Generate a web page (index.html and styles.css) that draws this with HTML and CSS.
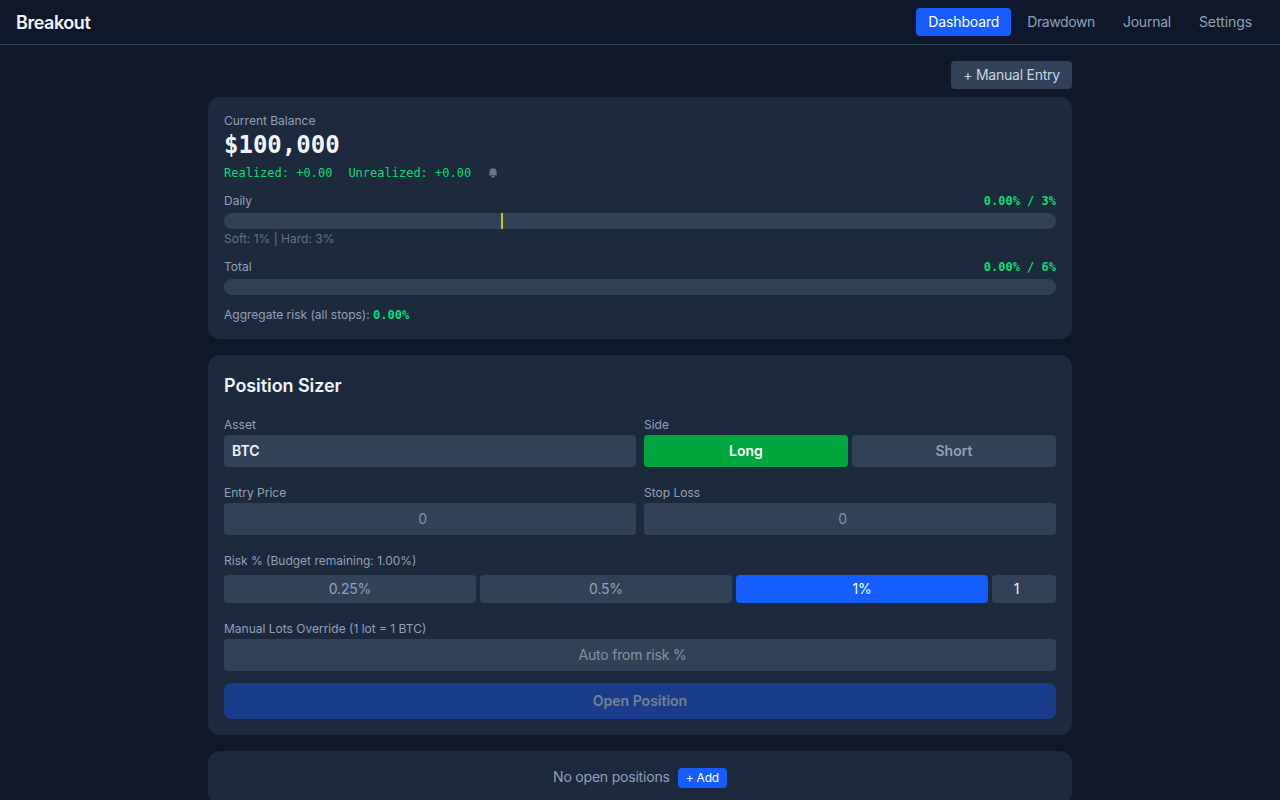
FILE: index.html
```html
<!DOCTYPE html>
<html lang="en">
<head>
<meta charset="utf-8">
<title>Breakout</title>
<link rel="stylesheet" href="styles.css">
</head>
<body>
<header class="topbar">
  <h1 class="brand">Breakout</h1>
  <nav class="nav">
    <a class="nav-link active">Dashboard</a>
    <a class="nav-link drawdown">Drawdown</a>
    <a class="nav-link journal">Journal</a>
    <a class="nav-link">Settings</a>
  </nav>
</header>
<main class="main">
  <div class="toolbar"><button class="manual">+ Manual Entry</button></div>
  <section class="card balance">
    <div class="label">Current Balance</div>
    <div class="amount">$100,000</div>
    <div class="pnl">
      <span>Realized: +0.00</span>
      <span>Unrealized: +0.00</span>
      <svg class="bell" viewBox="0 0 20 20" fill="currentColor"><path d="M10 2a6 6 0 00-6 6v3.586l-.707.707A1 1 0 004 14h12a1 1 0 00.707-1.707L16 11.586V8a6 6 0 00-6-6zM10 18a3 3 0 01-3-3h6a3 3 0 01-3 3z"/></svg>
    </div>
    <div class="meter daily">
      <div class="meter-head"><span>Daily</span><span class="value">0.00% / 3%</span></div>
      <div class="track"><div class="soft-mark"></div></div>
      <div class="hint">Soft: 1% | Hard: 3%</div>
    </div>
    <div class="meter">
      <div class="meter-head"><span>Total</span><span class="value">0.00% / 6%</span></div>
      <div class="track"></div>
    </div>
    <div class="label aggregate">Aggregate risk (all stops): <span class="value">0.00%</span></div>
  </section>
  <section class="card sizer">
    <h2 class="title">Position Sizer</h2>
    <div class="columns">
      <div>
        <div class="label">Asset</div>
        <div class="field asset">BTC</div>
      </div>
      <div>
        <div class="label">Side</div>
        <div class="sides">
          <button class="side long">Long</button>
          <button class="side">Short</button>
        </div>
      </div>
      <div>
        <div class="label">Entry Price</div>
        <div class="field number">0</div>
      </div>
      <div>
        <div class="label">Stop Loss</div>
        <div class="field number">0</div>
      </div>
    </div>
    <div>
      <div class="label">Risk % (Budget remaining: 1.00%)</div>
      <div class="risks">
        <button class="risk">0.25%</button>
        <button class="risk">0.5%</button>
        <button class="risk selected">1%</button>
        <div class="risk custom">1</div>
      </div>
    </div>
    <div>
      <div class="label">Manual Lots Override (1 lot = 1 BTC)</div>
      <div class="field number">Auto from risk %</div>
    </div>
    <button class="open">Open Position</button>
  </section>
  <section class="card positions">
    <span class="empty">No open positions</span><button class="add">+ Add</button>
  </section>
</main>
</body>
</html>
```
FILE: styles.css
```css
* { box-sizing: border-box; margin: 0; }
html { height: 100%; overflow: hidden; }
body {
  height: 100%;
  overflow: hidden;
  background: #0f172b;
  color: #f1f5f9;
  font: 400 14px/20px Inter, "Liberation Sans", sans-serif;
}
button { border: 0; padding: 0; font: inherit; color: inherit; }
.topbar {
  display: flex;
  align-items: center;
  justify-content: space-between;
  height: 45px;
  padding: 0 16px;
  border-bottom: 1px solid #314158;
}
.brand { padding-top: 1px; font-size: 18px; line-height: 28px; font-weight: 600; letter-spacing: -0.45px; }
.nav { display: flex; gap: 4px; }
.nav-link { padding: 4px 12px; border-radius: 4px; color: #90a1b9; letter-spacing: -0.07px; }
.nav-link.active { background: #155dfc; color: #fff; letter-spacing: -0.14px; }
.nav-link.drawdown { letter-spacing: -0.4px; }
.nav-link.journal { letter-spacing: -0.24px; }
.main { width: 896px; margin: 0 auto; padding: 16px; }
.toolbar { display: flex; justify-content: flex-end; margin-bottom: 8px; }
.manual { padding: 4px 12px; border-radius: 4px; background: #314158; color: #cad5e2; letter-spacing: -0.23px; }
.card { border-radius: 12px; background: #1d293d; padding: 16px; margin-bottom: 16px; }
.balance { height: 242px; }
.label { font-size: 12px; line-height: 16px; color: #90a1b9; }
.amount { font: bold 24px/32px "DejaVu Sans Mono", monospace; }
.pnl {
  display: flex;
  align-items: center;
  gap: 16px;
  margin-top: 4px;
  font: 12px/16px "DejaVu Sans Mono", monospace;
  color: #05df72;
}
.bell { width: 12px; height: 12px; color: #62748e; }
.meter { margin-top: 12px; }
.meter-head { display: flex; justify-content: space-between; margin-bottom: 4px; font-size: 12px; line-height: 16px; color: #90a1b9; }
.value { font-family: "DejaVu Sans Mono", monospace; font-weight: bold; color: #05df72; letter-spacing: 0; }
.track { height: 16px; border-radius: 8px; background: #314158; }
.soft-mark { width: 2px; height: 16px; margin-left: 33.333%; background: #d4bc2c; }
.hint { margin-top: 2px; font-size: 12px; line-height: 16px; color: #62748e; }
.aggregate { margin-top: 12px; }
.sizer { display: flex; flex-direction: column; gap: 12px; height: 380px; }
.sizer .label { padding: 6px 0 2px; }
.title { padding-top: 1px; font-size: 18px; line-height: 27px; font-weight: 600; letter-spacing: -0.07px; }
.columns { display: grid; grid-template-columns: 1fr 1fr; gap: 12px 8px; }
.field { display: flex; align-items: center; height: 32px; padding: 0 8px; border-radius: 4px; background: #314158; }
.asset { font-weight: 600; }
.number { justify-content: center; padding-right: 23px; color: #8792a2; letter-spacing: -0.2px; }
.sides, .risks { display: flex; gap: 4px; }
.risks { margin-top: 4px; }
.side { flex: 1; height: 32px; border-radius: 4px; background: #314158; color: #90a1b9; font-weight: 600; }
.side.long { background: #00a63e; color: #fff; }
.risk { flex: 1; height: 28px; border-radius: 4px; background: #314158; color: #90a1b9; line-height: 28px; text-align: center; letter-spacing: -0.2px; }
.risk.selected { background: #155dfc; color: #fff; }
.risk.custom { flex: 0 0 64px; padding-right: 15px; color: #f1f5f9; }
.open { height: 36px; border-radius: 8px; background: #1a3d8b; color: #76808f; font-weight: 600; }
.positions { display: flex; align-items: baseline; justify-content: center; gap: 8px; height: 53px; color: #90a1b9; }
.empty { letter-spacing: -0.2px; }
.add { padding: 2px 8px; border-radius: 4px; background: #155dfc; color: #fff; font-size: 12px; line-height: 16px; letter-spacing: -0.2px; }
```
